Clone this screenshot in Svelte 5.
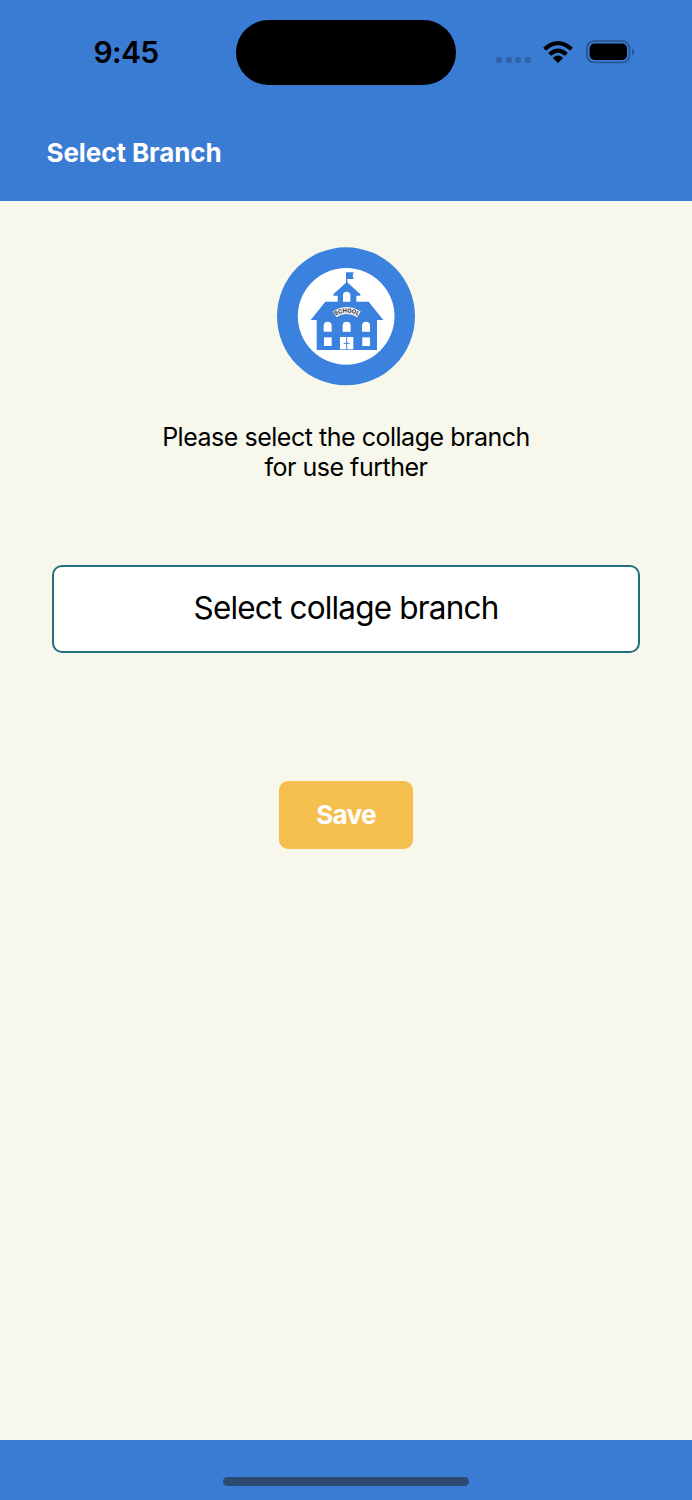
<script lang="ts">
    const title = 'Select Branch'
    const time = '9:45'

    const archedWindows = [140, 197, 255]
    const squareWindows = [141, 256]
    const signalDots = [0, 1, 2, 3]
</script>

<div class="screen">
    <header class="header">
        <div class="status-bar">
            <span class="time">{time}</span>
            <div class="island"></div>
            <div class="indicators">
                <div class="signal">
                    {#each signalDots as dot (dot)}
                        <span class="dot"></span>
                    {/each}
                </div>
                <svg class="wifi" viewBox="0 0 30 22" aria-hidden="true">
                    <path d="M.6 6.2Q15-6.4 29.4 6.2Q29.9 6.7 29.4 7.2L27.4 9.2Q26.9 9.6 26.4 9.2Q15-.5 3.6 9.2Q3.1 9.6 2.6 9.2L.6 7.2Q.1 6.7.6 6.2Z" />
                    <path d="M5.7 11.4Q15 3.5 24.3 11.4Q24.8 11.9 24.3 12.4L22.3 14.4Q21.8 14.8 21.3 14.4Q15 9 8.7 14.4Q8.2 14.8 7.7 14.4L5.7 12.4Q5.2 11.9 5.7 11.4Z" />
                    <path d="M10.4 16.4Q15 12.4 19.6 16.4Q20.1 16.9 19.6 17.4L15.6 21.4Q15 22 14.4 21.4L10.4 17.4Q9.9 16.9 10.4 16.4Z" />
                </svg>
                <svg class="battery" viewBox="0 0 49 24" aria-hidden="true">
                    <rect class="shell" x="1" y="1" width="42.5" height="21.5" rx="7" />
                    <rect x="3.6" y="3.6" width="37.4" height="16.4" rx="4.8" />
                    <path class="cap" d="M46 8.3Q48.2 9.4 48.2 11.8T46 15.3Z" />
                </svg>
            </div>
        </div>
        <h1 class="title">{title}</h1>
    </header>

    <main class="content">
        <svg class="logo" viewBox="0 0 414 414" role="img" aria-label="School">
            <circle class="blue" cx="207" cy="208" r="207" />
            <circle class="white" cx="207.5" cy="208" r="145" />
            <path
                class="blue"
                d="M207 76H230L227 86L230 96H211V106L250 142V146H238V164H275L319 219H300V309H119V219H101L145 164H182V146H169V142L207 107Z"
            />
            <path class="white" d="M198 164V145A11 11 0 0 1 220 145V164Z" />
            {#each archedWindows as x (x)}
                <path class="white" d="M{x} 254V236A12 12 0 0 1 {x + 24} 236V254Z" />
            {/each}
            {#each squareWindows as x (x)}
                <rect class="white" {x} y="271" width="23" height="26" />
            {/each}
            <rect class="white" x="189" y="270" width="40" height="37" />
            <path class="handle" d="M209 271V307M200 289H218" />
            <path class="banner" d="M173 202Q209 179 246 202" />
            <path id="banner-arc" class="guide" d="M165 212Q209 181 254 212" />
            <text class="banner-text">
                <textPath href="#banner-arc" startOffset="50%" text-anchor="middle">SCHOOL</textPath>
            </text>
        </svg>

        <p class="message">Please select the collage branch<br />for use further</p>

        <button class="select" type="button">Select collage branch</button>
        <button class="save" type="button">Save</button>
    </main>

    <footer class="footer">
        <div class="home-indicator"></div>
    </footer>
</div>

<style>
    :global(body) {
        margin: 0;
    }

    .screen {
        display: flex;
        flex-direction: column;
        width: 692px;
        height: 1500px;
        overflow: hidden;
        background: #f7f7eb;
        color: #000;
        font-family: Inter, 'Liberation Sans', sans-serif;
    }

    .header {
        flex: none;
        box-sizing: border-box;
        height: 201px;
        background: #3a7cd3;
    }

    .status-bar {
        display: grid;
        grid-template-columns: 236px 220px 236px;
        align-items: center;
        height: 104px;
    }

    .time {
        padding-left: 16px;
        font-size: 30px;
        font-weight: 600;
        letter-spacing: -0.7px;
        line-height: 36px;
        text-align: center;
    }

    .island {
        height: 65px;
        border-radius: 33px;
        background: #000;
    }

    .indicators {
        display: flex;
        align-items: center;
        padding-left: 40px;
    }

    .signal {
        display: flex;
        gap: 3.5px;
        padding-top: 15px;
    }

    .dot {
        width: 6px;
        height: 6px;
        border-radius: 2px;
        background: #2f64aa;
    }

    .wifi {
        width: 30px;
        height: 22px;
        margin-left: 12.7px;
        overflow: visible;
    }

    .battery {
        width: 49px;
        height: 24px;
        margin-left: 12.6px;
    }

    .shell {
        fill: none;
        stroke: #28548e;
        stroke-width: 1.7;
    }

    .cap {
        fill: #28548e;
    }

    .title {
        margin: 33px 0 0 46.5px;
        color: #fff;
        font-size: 26px;
        font-weight: 700;
        letter-spacing: -0.08px;
        line-height: 32px;
    }

    .content {
        flex: 1;
        display: flex;
        flex-direction: column;
        align-items: center;
        padding-top: 46px;
    }

    .logo {
        width: 138px;
        height: 138px;
        overflow: visible;
    }

    .blue {
        fill: #3b82df;
    }

    .white {
        fill: #fff;
    }

    .handle {
        fill: none;
        stroke: #3b82df;
        stroke-width: 3;
    }

    .banner {
        fill: none;
        stroke: #e9edf0;
        stroke-width: 20;
    }

    .guide {
        fill: none;
    }

    .banner-text {
        fill: #333;
        font-size: 17px;
        font-weight: 700;
    }

    .message {
        margin: 37px 0 0;
        font-size: 25px;
        letter-spacing: -0.48px;
        line-height: 30px;
        text-align: center;
    }

    button {
        box-sizing: border-box;
        padding: 0;
        font-family: inherit;
        cursor: pointer;
    }

    .select {
        width: 588px;
        height: 88px;
        margin-top: 82.5px;
        padding-bottom: 2px;
        border: 2px solid #22707f;
        border-radius: 10px;
        background: #fff;
        color: #000;
        font-size: 31.5px;
        letter-spacing: -0.82px;
    }

    .save {
        width: 134.5px;
        height: 68px;
        margin-top: 128.5px;
        padding-bottom: 2px;
        border: none;
        border-radius: 9px;
        background: #f4bf4e;
        color: #fff;
        font-size: 26px;
        font-weight: 700;
        letter-spacing: -0.7px;
    }

    .footer {
        flex: none;
        display: flex;
        justify-content: center;
        align-items: flex-end;
        box-sizing: border-box;
        height: 60px;
        padding-bottom: 14px;
        background: #3a7cd3;
    }

    .home-indicator {
        width: 246px;
        height: 9px;
        border-radius: 5px;
        background: #2d4a70;
    }
</style>
